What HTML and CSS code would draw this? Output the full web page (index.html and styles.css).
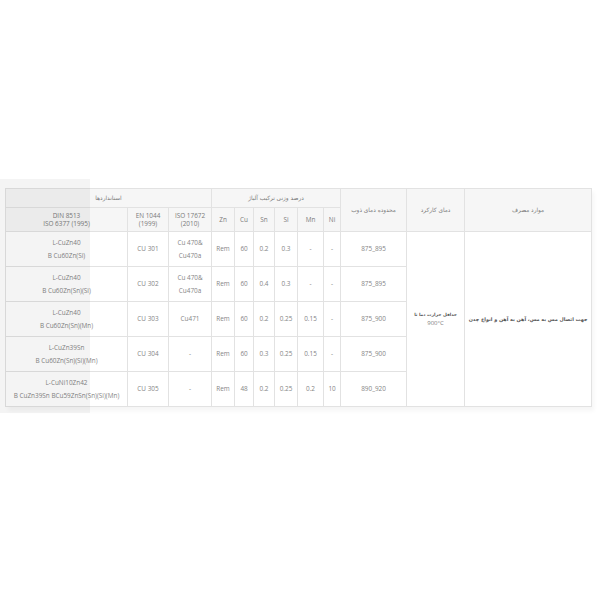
FILE: index.html
```html
<!DOCTYPE html>
<html lang="fa">
<head>
<meta charset="utf-8">
<title>Alloy table</title>
<link rel="stylesheet" href="styles.css">
</head>
<body>
<div class="page">
  <div class="shade"></div>
  <div class="wrap">
    <table class="spec">
      <colgroup>
        <col style="width:122px"><col style="width:41px"><col style="width:43px">
        <col style="width:23px"><col style="width:19px"><col style="width:21px">
        <col style="width:23px"><col style="width:26px"><col style="width:17px">
        <col style="width:66px"><col style="width:58px"><col style="width:127px">
      </colgroup>
      <thead>
        <tr class="h1">
          <th colspan="3" dir="rtl" class="fa">استانداردها</th>
          <th colspan="6" dir="rtl" class="fa">درصد وزنی ترکیب آلیاژ</th>
          <th rowspan="2" dir="rtl" class="fa">محدوده دمای ذوب</th>
          <th rowspan="2" dir="rtl" class="fa">دمای کارکرد</th>
          <th rowspan="2" dir="rtl" class="fa">موارد مصرف</th>
        </tr>
        <tr class="h2">
          <th>DIN 8513<br>ISO 6377 (1995)</th>
          <th>EN 1044<br>(1999)</th>
          <th>ISO 17672<br>(2010)</th>
          <th>Zn</th><th>Cu</th><th>Sn</th><th>Si</th><th>Mn</th><th>Ni</th>
        </tr>
      </thead>
      <tbody>
        <tr>
          <td class="two">L-CuZn40<br>B Cu60Zn(Si)</td>
          <td>CU 301</td>
          <td class="two">Cu 470&amp;<br>Cu470a</td>
          <td>Rem</td><td>60</td><td>0.2</td><td>0.3</td><td>-</td><td>-</td>
          <td>875_895</td>
          <td rowspan="5" class="fa strong temp" dir="rtl">حداقل حرارت دما تا<br><span class="deg" dir="ltr">900°C</span></td>
          <td rowspan="5" class="fa strong" dir="rtl">جهت اتصال مس به مس، آهن به آهن و انواع چدن</td>
        </tr>
        <tr>
          <td class="two">L-CuZn40<br>B Cu60Zn(Sn)(Si)</td>
          <td>CU 302</td>
          <td class="two">Cu 470&amp;<br>Cu470a</td>
          <td>Rem</td><td>60</td><td>0.4</td><td>0.3</td><td>-</td><td>-</td>
          <td>875_895</td>
        </tr>
        <tr>
          <td class="two">L-CuZn40<br>B Cu60Zn(Sn)(Mn)</td>
          <td>CU 303</td>
          <td>Cu471</td>
          <td>Rem</td><td>60</td><td>0.2</td><td>0.25</td><td>0.15</td><td>-</td>
          <td>875_900</td>
        </tr>
        <tr>
          <td class="two">L-CuZn39Sn<br>B Cu60Zn(Sn)(Si)(Mn)</td>
          <td>CU 304</td>
          <td>-</td>
          <td>Rem</td><td>60</td><td>0.3</td><td>0.25</td><td>0.15</td><td>-</td>
          <td>875_900</td>
        </tr>
        <tr>
          <td class="two">L-CuNi10Zn42<br>B CuZn39Sn BCu59ZnSn(Sn)(Si)(Mn)</td>
          <td>CU 305</td>
          <td>-</td>
          <td>Rem</td><td>48</td><td>0.2</td><td>0.25</td><td>0.2</td><td>10</td>
          <td>890_920</td>
        </tr>
      </tbody>
    </table>
  </div>
</div>
</body>
</html>
```

FILE: styles.css
```css
html, body {
  margin: 0;
  padding: 0;
  background: #ffffff;
}

.page {
  position: relative;
  width: 600px;
  height: 600px;
  padding: 188px 0 0 5px;
  box-sizing: border-box;
  font-family: "Open Sans", "DejaVu Sans", sans-serif;
}

.shade {
  position: absolute;
  left: 0;
  top: 179px;
  width: 90px;
  height: 234px;
  background: rgba(0, 0, 0, 0.045);
  pointer-events: none;
  z-index: 2;
}

.wrap {
  width: 586px;
  box-shadow: 3px 4px 4px rgba(0, 0, 0, 0.04);
}

.spec {
  width: 586px;
  table-layout: fixed;
  border-collapse: collapse;
  color: #858585;
  font-size: 6.4px;
  text-align: center;
}

.spec th,
.spec td {
  border: 1px solid #e2e2e2;
  padding: 0 1px;
  vertical-align: middle;
  font-weight: normal;
  overflow: hidden;
  white-space: nowrap;
}

.spec thead th {
  background: #f6f6f6;
  color: #7a7a7a;
}

.h1 th {
  height: 18px;
  line-height: 8px;
}

.h2 th {
  height: 23px;
  line-height: 8px;
}

.spec tbody td {
  height: 34px;
  line-height: 13.5px;
  background: #ffffff;
}

.fa {
  font-family: "DejaVu Sans", sans-serif;
  font-size: 5.8px;
}

.spec td.strong {
  font-size: 4.9px;
  font-weight: bold;
  color: #555555;
  line-height: 8px;
}

.spec td.temp {
  font-size: 4.4px;
}

.deg {
  font-family: "Open Sans", sans-serif;
  font-weight: normal;
  font-size: 6px;
  color: #808080;
}
```
